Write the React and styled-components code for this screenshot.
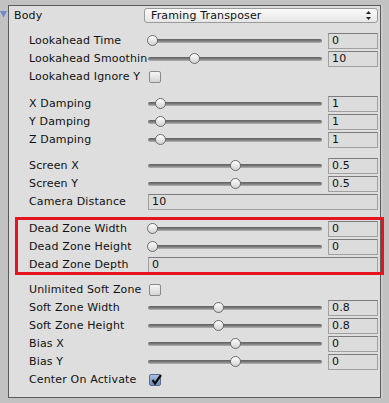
import React from "react";
import styled, { createGlobalStyle } from "styled-components";

const GlobalStyle = createGlobalStyle`
  html, body {
    margin: 0;
    padding: 0;
    background: #c2c2c2;
  }
  body {
    font-family: "DejaVu Sans", Verdana, sans-serif;
    font-size: 11px;
    letter-spacing: 0.15px;
    color: #111;
  }
`;

const Page = styled.div`
  width: 389px;
  height: 403px;
  box-sizing: border-box;
  padding-top: 5px;
  display: flex;
  align-items: flex-start;
  overflow: hidden;
  background: #c2c2c2;
`;

const Foldout = styled.div`
  flex: none;
  width: 8px;
  padding-top: 6px;
  display: flex;
`;

const Panel = styled.div`
  flex: none;
  width: 373px;
  height: 393px;
  box-sizing: border-box;
  border: 1px solid #5b5b5b;
  background: #dedede;
  padding: 2px 2px 0 5px;
  box-shadow: 1px 0 0 #cfcfcf, 2px 0 0 #c9c9c9;
`;

const Header = styled.div`
  display: flex;
  align-items: center;
  height: 15px;
`;

const HeaderLabel = styled.div`
  width: 130px;
  flex: none;
`;

const Dropdown = styled.div`
  width: 234px;
  height: 15px;
  box-sizing: border-box;
  border: 1px solid #9a9a9a;
  border-radius: 3px;
  background: linear-gradient(#fbfbfb, #e6e6e6);
  display: flex;
  align-items: center;
  justify-content: space-between;
  padding: 0 6px 0 6px;
  line-height: 13px;
`;

const List = styled.div`
  margin-top: 9px;
`;

const Spacer = styled.div`
  height: ${p => p.h}px;
`;

const Group = styled.div`
  position: relative;
`;

const Highlight = styled.div`
  position: absolute;
  top: -3px;
  bottom: -1px;
  left: 1px;
  right: -6px;
  border: 3px solid #e5141e;
  pointer-events: none;
`;

const Row = styled.div`
  display: grid;
  grid-template-columns: 119px 230px;
  height: 18px;
  align-items: center;
  padding-left: 15px;
`;

const Label = styled.div`
  white-space: nowrap;
  overflow: hidden;
  line-height: 18px;
`;

const SliderField = styled.div`
  display: flex;
  align-items: center;
  gap: 6px;
`;

const Slider = styled.div`
  position: relative;
  width: 174px;
  height: 18px;
  display: flex;
  align-items: center;
`;

const Track = styled.div`
  width: 100%;
  height: 4px;
  border-radius: 2px;
  background: linear-gradient(#5f5f5f, #7d7d7d 50%, #b4b4b4);
`;

const Thumb = styled.div`
  position: absolute;
  top: 3px;
  width: 11px;
  height: 11px;
  box-sizing: border-box;
  border-radius: 50%;
  border: 1px solid #6c6c6c;
  background: linear-gradient(#ffffff, #d2d2d2);
`;

const Field = styled.div`
  width: ${p => p.wide ? "230px" : "50px"};
  height: 16px;
  box-sizing: border-box;
  border: 1px solid #a0a0a0;
  border-top-color: #7c7c7c;
  background: #dcdcdc;
  padding-left: 3px;
  line-height: 14px;
`;

const Box = styled.div`
  position: relative;
  margin-left: 1px;
  width: 12px;
  height: 12px;
  box-sizing: border-box;
  border: 1px solid ${p => p.checked ? "#5b6d8c" : "#8a8a8a"};
  border-radius: 2px;
  background: ${p => p.checked
    ? "linear-gradient(#a9bedf, #6f8fc0)"
    : "linear-gradient(#f6f6f6, #d4d4d4)"};
`;

const CheckMark = styled.svg`
  position: absolute;
  left: 0px;
  top: -2px;
`;

function Triangle() {
  return (
    <svg width="7" height="7" viewBox="0 0 7 7">
      <polygon points="0,0 7,0 3.5,6.5" fill="#7088cc" />
    </svg>
  );
}

function Arrows() {
  return (
    <svg width="5" height="9" viewBox="0 0 5 9">
      <polygon points="2.5,0 5,3 0,3" fill="#222" />
      <polygon points="0,6 5,6 2.5,9" fill="#222" />
    </svg>
  );
}

function SliderRow({ label, value, frac }) {
  return (
    <Row>
      <Label>{label}</Label>
      <SliderField>
        <Slider>
          <Track />
          <Thumb style={{ left: `${-1.5 + frac * 166}px` }} />
        </Slider>
        <Field>{value}</Field>
      </SliderField>
    </Row>
  );
}

function FieldRow({ label, value }) {
  return (
    <Row>
      <Label>{label}</Label>
      <Field wide>{value}</Field>
    </Row>
  );
}

function ToggleRow({ label, checked }) {
  return (
    <Row>
      <Label>{label}</Label>
      <div>
        <Box checked={checked}>
          {checked && (
            <CheckMark width="13" height="13" viewBox="0 0 13 13">
              <path d="M2.5 7 L5 10.5 L11 2" fill="none" stroke="#111" strokeWidth="2.2" />
            </CheckMark>
          )}
        </Box>
      </div>
    </Row>
  );
}

export default function App() {
  return (
    <Page>
      <GlobalStyle />
      <Foldout>
        <Triangle />
      </Foldout>
      <Panel>
        <Header>
          <HeaderLabel>Body</HeaderLabel>
          <Dropdown>
            <span>Framing Transposer</span>
            <Arrows />
          </Dropdown>
        </Header>
        <List>
          <SliderRow label="Lookahead Time" value="0" frac={0} />
          <SliderRow label="Lookahead Smoothing" value="10" frac={0.259} />
          <ToggleRow label="Lookahead Ignore Y" />
          <Spacer h={9} />
          <SliderRow label="X Damping" value="1" frac={0.05} />
          <SliderRow label="Y Damping" value="1" frac={0.05} />
          <SliderRow label="Z Damping" value="1" frac={0.05} />
          <Spacer h={8} />
          <SliderRow label="Screen X" value="0.5" frac={0.5} />
          <SliderRow label="Screen Y" value="0.5" frac={0.5} />
          <FieldRow label="Camera Distance" value="10" />
          <Spacer h={9} />
          <Group>
            <SliderRow label="Dead Zone Width" value="0" frac={0} />
            <SliderRow label="Dead Zone Height" value="0" frac={0} />
            <FieldRow label="Dead Zone Depth" value="0" />
            <Highlight />
          </Group>
          <Spacer h={7} />
          <ToggleRow label="Unlimited Soft Zone" />
          <SliderRow label="Soft Zone Width" value="0.8" frac={0.4} />
          <SliderRow label="Soft Zone Height" value="0.8" frac={0.4} />
          <SliderRow label="Bias X" value="0" frac={0.5} />
          <SliderRow label="Bias Y" value="0" frac={0.5} />
          <ToggleRow label="Center On Activate" checked />
        </List>
      </Panel>
    </Page>
  );
}
